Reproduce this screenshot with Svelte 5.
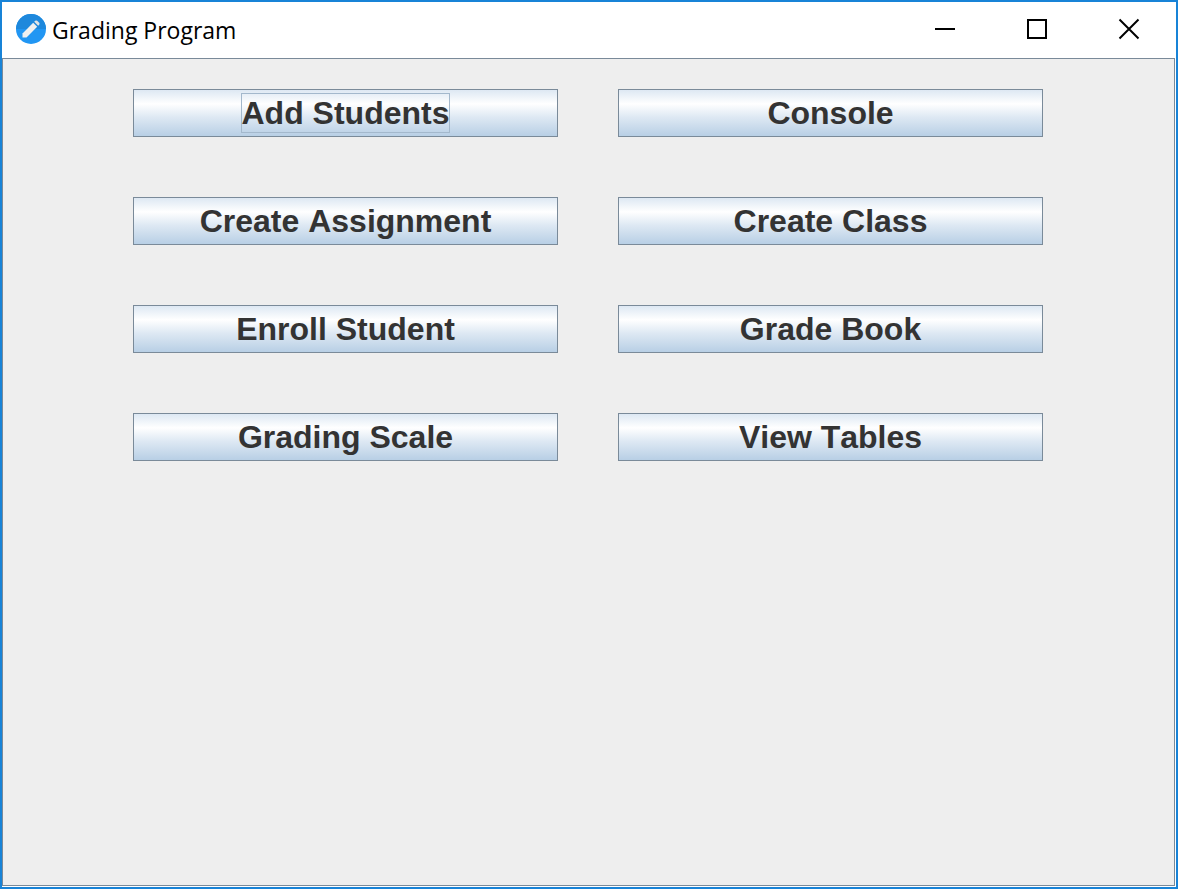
<script>
  const actions = [
    'Add Students', 'Console',
    'Create Assignment', 'Create Class',
    'Enroll Student', 'Grade Book',
    'Grading Scale', 'View Tables'
  ];
  let current = $state('Add Students');
</script>

<div class="window">
  <header>
    <svg class="logo" viewBox="0 0 30 30" aria-hidden="true">
      <circle cx="15" cy="15" r="15" fill="#2196f3" />
      <path d="M0 15a15 15 0 0 1 30 0z" fill="#1e88dc" />
      <path d="M6.5 23.5v-4L17.2 8.8l4 4L10.5 23.5z" fill="#f0f0f0" />
      <path d="M18.2 7.8l1-1q1-.8 2 0l2 2q.8 1 0 2l-1 1z" fill="#e4e4e4" />
    </svg>
    <h1>Grading Program</h1>
    <div class="controls">
      <button aria-label="Minimize">
        <svg viewBox="0 0 20 20"><path d="M0 10h20" /></svg>
      </button>
      <button aria-label="Maximize">
        <svg viewBox="0 0 20 20"><path d="M1 1h18v18H1z" /></svg>
      </button>
      <button aria-label="Close">
        <svg viewBox="0 0 20 20"><path d="M.5.5l19 19M19.5.5l-19 19" /></svg>
      </button>
    </div>
  </header>
  <main>
    <div class="grid">
      {#each actions as action}
        <button class="action" onclick={() => (current = action)}>
          <span class:current={current === action}>{action}</span>
        </button>
      {/each}
    </div>
  </main>
</div>

<style>
  :global(body) { margin: 0; }
  .window {
    box-sizing: border-box;
    min-height: 100vh;
    display: flex;
    flex-direction: column;
    border: 2px solid #1883d7;
    background: #fff;
  }
  header {
    display: flex;
    align-items: center;
    height: 56px;
    padding: 0 1px 0 14px;
    box-sizing: border-box;
  }
  .logo { width: 30px; height: 30px; margin-right: 6px; margin-bottom: 2px; }
  h1 {
    margin: 0;
    font: 400 23px/32px "Segoe UI", "Open Sans", sans-serif;
    color: #000;
  }
  .controls { display: flex; margin-left: auto; height: 100%; }
  .controls button {
    display: grid;
    place-items: center;
    width: 92px;
    padding: 0 0 2px;
    border: 0;
    background: none;
  }
  .controls svg {
    width: 20px;
    height: 20px;
    overflow: visible;
    fill: none;
    stroke: #000;
    stroke-width: 2;
  }
  main {
    flex: 1;
    margin: 0 1px 1px 0;
    padding: 30px 131px 30px 130px;
    border: 1px solid #7a8a99;
    background: #eee;
  }
  .grid {
    display: grid;
    grid-template-columns: 1fr 1fr;
    gap: 60px;
  }
  .action {
    display: flex;
    align-items: center;
    justify-content: center;
    height: 48px;
    padding: 0;
    border: 1px solid #7a8a99;
    border-radius: 0;
    background: linear-gradient(#dde8f3, #fff 30%, #dde8f3 60%, #b8cfe5);
    font: 700 32px/38px "Liberation Sans", Arial, sans-serif;
    font-kerning: none;
    color: #333;
  }
  .action span { border: 1px solid transparent; }
  .action .current { border-color: #a3b8cc; }
</style>
